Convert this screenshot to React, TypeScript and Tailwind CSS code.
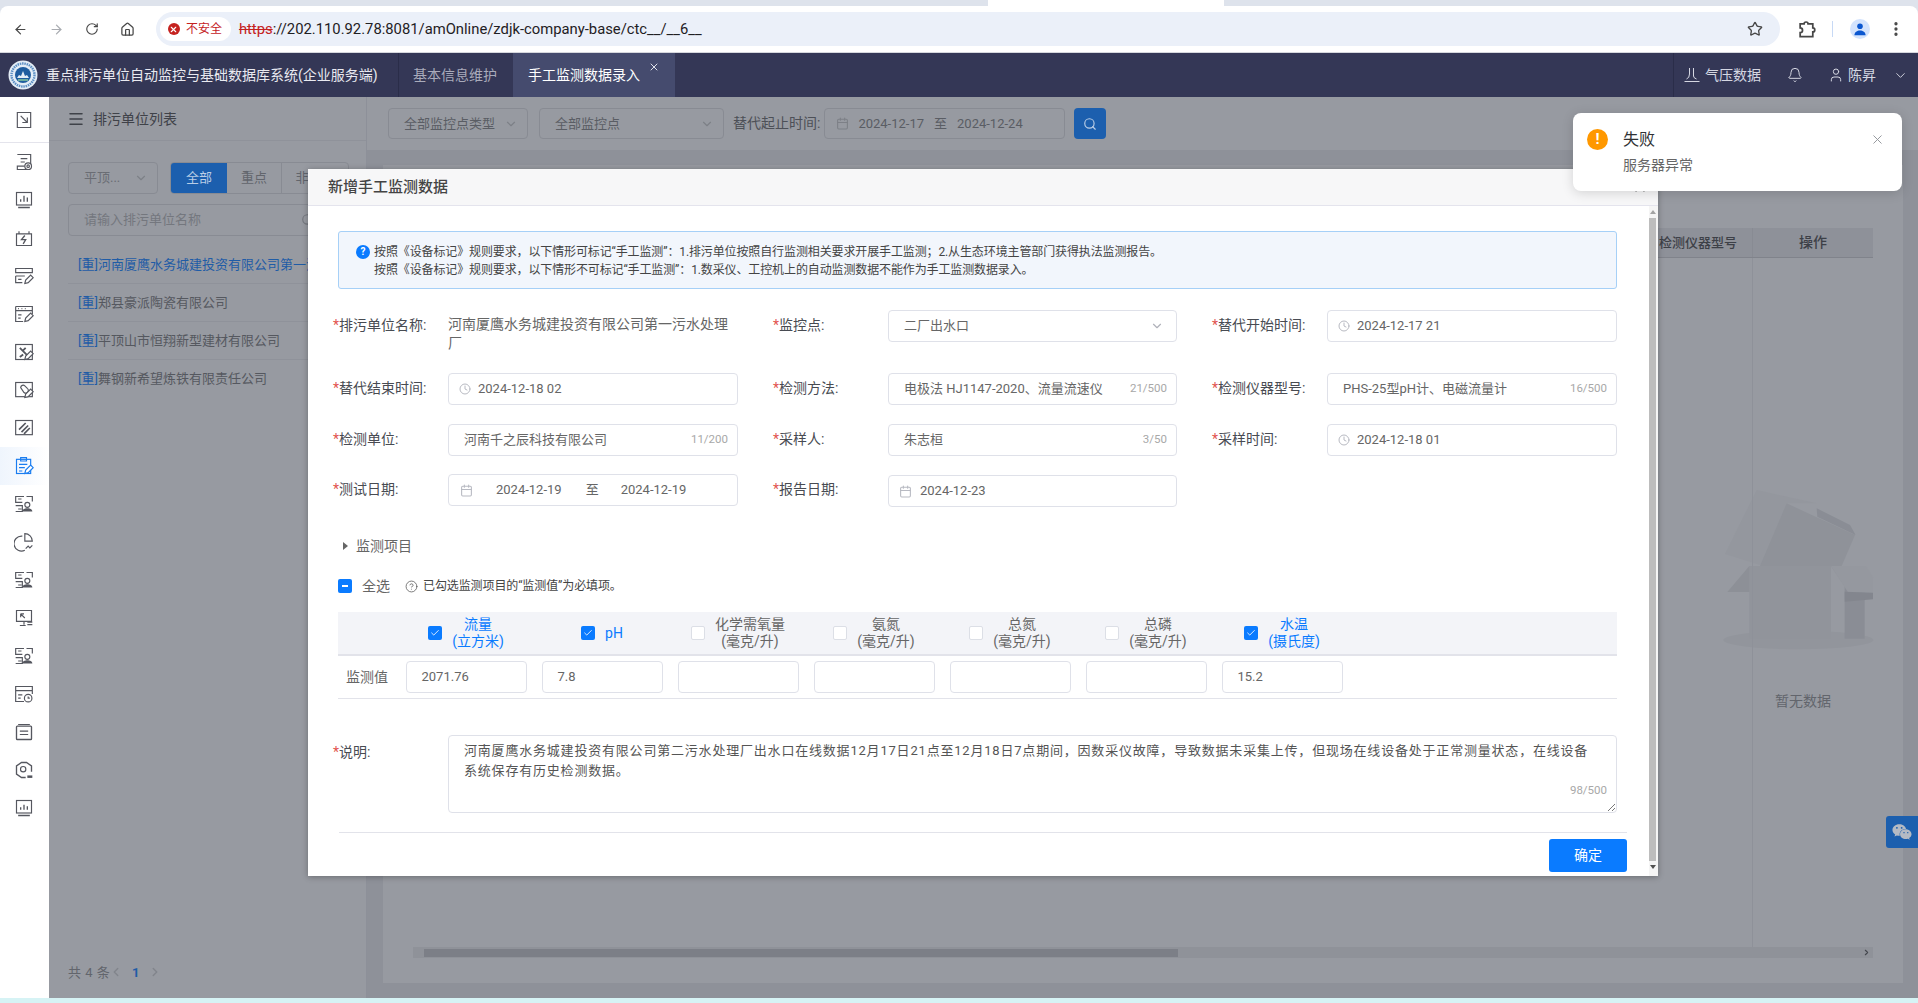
import type { ReactNode } from 'react';
import { ArrowLeft, ArrowRight, RotateCw, Home, Star, MoreVertical, ChevronDown, ChevronLeft, ChevronRight, Search, Clock, Calendar, X, Bell, User, Menu, Check, CircleHelp } from 'lucide-react';
import { FaWeixin } from 'react-icons/fa';

const Line = ({ children, className }: { children: ReactNode; className?: string }) => (
  <svg viewBox="0 0 24 24" width="20" height="20" fill="none" stroke="currentColor" strokeWidth="1.4" className={className}>
    {children}
  </svg>
);

const pen = <path d="M13 21l1-4 6-6 3 3-6 6z" fill="#fff" />;
const person = (
  <>
    <circle cx="16" cy="13" r="3" fill="#fff" />
    <path d="M10 21c0-3 3-4 6-4s6 1 6 4z" fill="currentColor" stroke="none" />
  </>
);
const formPerson = (
  <>
    <path d="M12 3H2v7h8M2 14h8v7H2M5 6h4M5 18h4M15 3h7v6" />
    {person}
  </>
);

// sidebar icons, top to bottom
const sideIcons: ReactNode[] = [
  <><path d="M4 3h16v14l-3 4H4v-4h9" /><path d="M8 8h8M8 12h5" /><circle cx="17" cy="17" r="4" fill="#fff" /><circle cx="17" cy="17" r="1.5" /></>,
  <><rect x="3" y="3" width="18" height="15" /><path d="M8 14v-3M12 14V7M16 14v-5M5 21h14" strokeWidth="1.6" /></>,
  <><path d="M3 7h18v14H3zM6 7V4M18 7V4" /><path d="M13 9l-4 5h5l-3 5" strokeWidth="1.6" /></>,
  <><path d="M2 3h20v5H2zM2 12h11M2 12v8h8M5 16h4" />{pen}</>,
  <><path d="M2 3h20v9M2 3v18h9M2 8h20M5 5.5h1M9 5.5h1M13 5.5h1M5 13h4M5 17h3" />{pen}</>,
  <><rect x="2" y="3" width="20" height="18" /><path d="M7 7l9 9M11 15l-4 3M14 7l-4 4" strokeWidth="2.2" />{pen}</>,
  <><rect x="2" y="3" width="20" height="17" /><path d="M8 9a3 3 0 0 1 5-2l3 3a3 3 0 0 1-4 5z" />{pen}</>,
  <><rect x="2" y="3" width="20" height="17" /><path d="M6 14l8-8M9 17l8-8M12 19l7-7" strokeWidth="2" /></>,
  <><rect x="3" y="4" width="17" height="17" /><path d="M8 2h7v4H8zM6 10h10M6 14h7M6 18h4" />{pen}</>,
  formPerson,
  <><path d="M10 5a9 9 0 1 0 3 17M13 2v9h9a9 9 0 0 0-9-9z" /><path d="M14 20l3-3 2 2 3-3" /></>,
  formPerson,
  <><path d="M3 3h18v13H3zM12 16v4M7 21h7M8 7l5 5M8 7v4M8 7h4M16 17h6M16 20h6" /></>,
  formPerson,
  <><path d="M12 21H2V3h20v9M2 8h20M5 13h5M5 17h3" /><circle cx="17" cy="17" r="4.5" fill="#fff" /><path d="M17 15v2h2" /></>,
  <><rect x="3" y="5" width="18" height="16" rx="1" strokeWidth="1.6" /><path d="M5 3h14M7 11h10M7 15h10" /></>,
  <><path d="M14 21H9l-6-4V7l6-4h6l6 4v7" strokeWidth="1.6" /><circle cx="11" cy="11" r="3.2" /><path d="M16 20h6" strokeWidth="3" /></>,
  <><rect x="3" y="3" width="18" height="15" /><path d="M8 14v-3M12 14V8M16 14v-4M5 21h14" strokeWidth="1.6" /></>,
];

function BrowserBar() {
  return (
    <div className="relative h-[53px] shrink-0 bg-[#dee3ec] pt-[6px]">
      <div className="absolute left-[988px] top-0 h-[6px] w-[236px] bg-white" />
      <div className="flex h-[47px] items-center rounded-t-[8px] border-b border-[#d5d7dd] bg-white pl-[13px] pr-[13px] text-[#474747]">
        <ArrowLeft size={15} strokeWidth={2} />
        <ArrowRight size={15} strokeWidth={2} className="ml-[21px] text-[#a9acb1]" />
        <RotateCw size={14} strokeWidth={2} className="ml-[21px]" />
        <Home size={15} strokeWidth={2} className="ml-[21px]" />
        <div className="ml-[21px] flex h-[34px] w-[1628px] items-center rounded-full bg-[#ebf0f9] pl-[4px] pr-[17px]">
          <div className="flex h-[24px] w-[71px] items-center rounded-full bg-white pl-[8px] text-[12px] text-[#c5221f]">
            <span className="flex h-[12px] w-[12px] items-center justify-center rounded-full bg-[#c5221f] text-white">
              <X size={9} strokeWidth={3} />
            </span>
            <span className="ml-[6px]">不安全</span>
          </div>
          <div className="ml-[8px] text-[14.8px] text-[#1f2023]">
            <span className="text-[#c5221f] line-through">https</span>://202.110.92.78:8081/amOnline/zdjk-company-base/ctc__/__6__
          </div>
          <Star size={16} strokeWidth={2} className="ml-auto" />
        </div>
        <svg viewBox="0 0 24 24" width="19" height="19" fill="none" stroke="currentColor" strokeWidth="2.2" className="ml-[17px]">
          <path d="M4 5h5a2.5 2.5 0 0 1 5 0h6v5a2.5 2.5 0 0 1 0 5v6H4v-5a2.5 2.5 0 0 0 0-6z" />
        </svg>
        <div className="ml-[16px] h-[16px] w-px bg-[#c7d9f5]" />
        <span className="ml-[17px] flex h-[20px] w-[20px] items-center justify-center overflow-hidden rounded-full bg-[#d3e3fd]">
          <svg viewBox="0 0 20 20" width="14" height="14" fill="#0b57d0">
            <circle cx="10" cy="6" r="4" />
            <path d="M2 19c0-5 4-7 8-7s8 2 8 7z" />
          </svg>
        </span>
        <MoreVertical size={18} strokeWidth={2.4} className="ml-[17px]" />
      </div>
    </div>
  );
}

function NavBar() {
  return (
    <div className="flex h-[44px] shrink-0 items-center bg-[#343756] text-[14px] text-[#e8e9f0]">
      <svg viewBox="0 0 30 30" width="30" height="30" className="ml-[8px] shrink-0">
        <circle cx="15" cy="15" r="14.5" fill="#e4edf6" />
        <circle cx="15" cy="15" r="11.5" fill="none" stroke="#5c8fc4" strokeWidth="2.4" strokeDasharray="1.5 0.8" />
        <circle cx="15" cy="15" r="8" fill="#1f5d9f" />
        <path d="M9 18h12l-2-3-2 1-2-5-2 5-2-1z" fill="#e4edf6" />
        <path d="M10 20h10" stroke="#8fd0a0" strokeWidth="1.4" />
      </svg>
      <div className="ml-[8px] w-[352px] whitespace-nowrap">重点排污单位自动监控与基础数据库系统(企业服务端)</div>
      <div className="h-full w-[115px] border-l border-[#2a2d49] pl-[14px] leading-[44px] text-[#a9abbb]">基本信息维护</div>
      <div className="relative h-full w-[162px] bg-[#454b6e] pl-[15px] leading-[44px] text-white">
        手工监测数据录入
        <X size={12} strokeWidth={2} className="absolute right-[15px] top-[8px] text-[#dfe1ea]" />
      </div>
      <div className="ml-auto flex h-full w-[245px] items-center border-l border-[#2a2d49] pl-[10px] text-[#d5d7e2]">
        <svg viewBox="0 0 16 16" width="16" height="16" fill="none" stroke="currentColor" strokeWidth="1">
          <path d="M5.5 1v6q0 4-3 5M9.5 1v8q0 2 3 3M.5 14.5h15" />
        </svg>
        <span className="ml-[5px]">气压数据</span>
        <Bell size={16} strokeWidth={1.5} className="ml-[26px]" />
        <User size={16} strokeWidth={1.5} className="ml-[25px]" />
        <span className="ml-[4px]">陈昇</span>
        <ChevronDown size={15} strokeWidth={1.5} className="ml-[17px]" />
      </div>
    </div>
  );
}

function Sidebar() {
  return (
    <div className="w-[49px] shrink-0 bg-white pr-0 text-[#55575f]">
      <div className="flex h-[46px] items-center justify-center border-b border-[#e4e4ec] pr-[2px]">
        <Line><path d="M4 3h16v18H4z" /><path d="M8 7l8 8M16 9v6H10" /></Line>
      </div>
      {sideIcons.map((icon, i) => (
        <div
          key={i}
          className={`flex h-[38px] items-center justify-center pr-[2px] ${i === 8 ? 'bg-gradient-to-r from-[#eff5fd] to-white text-[#1a7df0]' : ''}`}
        >
          <Line>{icon}</Line>
        </div>
      ))}
    </div>
  );
}

const companies = ['郑县豪派陶瓷有限公司', '平顶山市恒翔新型建材有限公司', '舞钢新希望炼铁有限责任公司'];

function ListPanel() {
  return (
    <div className="flex w-[318px] shrink-0 flex-col border-r border-[#8d9099] bg-[#979aa1] text-[13px] text-[#55585f]">
      <div className="flex h-[44px] shrink-0 items-center border-b border-[#8f929a] pl-[18px] pt-px text-[#3f4249]">
        <Menu size={18} strokeWidth={2} />
        <span className="ml-[8px] text-[14px]">排污单位列表</span>
      </div>
      <div className="mt-[21px] flex h-[32px] pl-[19px]">
        <div className="flex w-[90px] items-center justify-between rounded-[4px] border border-[#888b93] pl-[15px] pr-[9px] text-[#6a6d74]">
          平顶...
          <ChevronDown size={14} className="text-[#7d8087]" />
        </div>
        <div className="ml-[12px] flex overflow-hidden rounded-[4px] border border-[#888b93]">
          <span className="flex w-[56px] items-center justify-center bg-[#1c5fae] text-[#b9cde6]">全部</span>
          <span className="flex w-[55px] items-center justify-center border-r border-[#888b93] text-[#62656c]">重点</span>
          <span className="flex w-[66px] items-center justify-center text-[#62656c]">非重点</span>
        </div>
      </div>
      <div className="ml-[19px] mr-[20px] mt-[10px] flex h-[32px] shrink-0 items-center justify-between rounded-[4px] border border-[#888b93] pl-[15px] pr-[30px] text-[#74777e]">
        请输入排污单位名称
        <Search size={14} />
      </div>
      <div className="mx-[19px] mt-[10px]">
        <div className="flex h-[38px] items-center overflow-hidden whitespace-nowrap border-b border-[#8f929a] pl-[10px] text-[#1f5ca6]">
          [重]河南厦鹰水务城建投资有限公司第一污水处理厂
        </div>
        {companies.map((name) => (
          <div key={name} className="flex h-[38px] items-center border-b border-[#8f929a] pl-[10px] last:border-b-0">
            <span className="text-[#1f5ca6]">[重]</span>
            {name}
          </div>
        ))}
      </div>
      <div className="mt-auto flex items-center pb-[16px] pl-[19px] text-[#62656c]">
        <span className="w-[41px] whitespace-nowrap tracking-[0.5px]">共 4 条</span>
        <ChevronLeft size={14} strokeWidth={2.5} className="text-[#82858c]" />
        <span className="ml-[9px] font-bold text-[#1f5ca6]">1</span>
        <ChevronRight size={14} strokeWidth={2.5} className="ml-[9px] text-[#82858c]" />
      </div>
    </div>
  );
}

function MainArea() {
  return (
    <div className="flex min-w-0 flex-1 flex-col bg-[#8e9199]">
      <div className="flex h-[53px] shrink-0 items-center bg-[#979aa1] pl-[21px] text-[13px] text-[#5a5d64]">
        <div className="flex h-[31px] w-[140px] items-center justify-between rounded-[4px] border border-[#888b93] pl-[15px] pr-[9px]">
          全部监控点类型
          <ChevronDown size={14} className="text-[#7d8087]" />
        </div>
        <div className="ml-[11px] flex h-[31px] w-[185px] items-center justify-between rounded-[4px] border border-[#888b93] pl-[15px] pr-[9px]">
          全部监控点
          <ChevronDown size={14} className="text-[#7d8087]" />
        </div>
        <span className="ml-[9px] text-[14px] text-[#4d5057]">替代起止时间:</span>
        <div className="ml-[4px] flex h-[31px] w-[241px] items-center rounded-[4px] border border-[#888b93] pl-[11px]">
          <Calendar size={13} className="text-[#7d8087]" />
          <span className="ml-[9px]">2024-12-17</span>
          <span className="ml-[10px]">至</span>
          <span className="ml-[10px]">2024-12-24</span>
        </div>
        <div className="ml-[9px] flex h-[31px] w-[32px] items-center justify-center rounded-[4px] bg-[#1c5fae] text-[#b9cde6]">
          <Search size={14} />
        </div>
      </div>
      <div className="relative mb-[15px] ml-[16px] mr-[15px] mt-[15px] flex flex-1 flex-col bg-[#979aa1] px-[30px] pb-[25px] pt-[63px] text-[14px]">
        <svg viewBox="0 0 684 600" width="228" height="200" className="absolute left-[1307px] top-[305px]">
          <ellipse cx="325" cy="510" rx="225" ry="28" fill="#92959c" />
          <path d="M105 252L200 60l180 40-90 0-70 188z" fill="#94979e" />
          <path d="M290 100l205 95-40 93H210z" fill="#8f9299" />
          <path d="M380 115l100 50 17 30-115-55z" fill="#8a8d95" />
          <path d="M178 288h245v218H178z" fill="#91949b" />
          <path d="M423 288l41 60v158h60V288z" fill="#8a8d95" />
          <path d="M423 288h105l21 34v46H475z" fill="#95989f" />
          <path d="M464 365l85 3v20l-85 7z" fill="#83868e" />
          <path d="M178 288v78H112z" fill="#8d9097" />
        </svg>
        <div className="relative flex h-[30px] shrink-0 justify-end border-b border-[#80838b] bg-[#8e9199] text-[#3d4047]">
          <div className="flex w-[100px] items-center pl-[7px] text-[13px] font-medium">检测仪器型号</div>
          <div className="flex w-[121px] items-center justify-center border-l border-[#888b93] font-medium">操作</div>
        </div>
        <div className="relative flex min-h-0 flex-1 justify-end">
          <div className="w-[121px] border-l border-[#8e9199] pr-[20px] pt-[433px] text-center text-[#62656c]">暂无数据</div>
        </div>
        <div className="relative flex h-[11px] shrink-0 items-center justify-between bg-[#8f9299] px-[2px]">
          <div className="ml-[9px] h-[8px] w-[754px] bg-[#7c7f87]" />
          <ChevronRight size={9} strokeWidth={3} className="text-[#44474e]" />
        </div>
      </div>
    </div>
  );
}

function Field({ label, children }: { label: string; children: ReactNode }) {
  return (
    <div className="flex items-start">
      <div className="w-[115px] shrink-0 pt-[5px] text-[14px] leading-[20px] text-[#484b52]">
        <span className="text-[#e2544f]">*</span>
        {label}:
      </div>
      <div className="min-w-0 flex-1">{children}</div>
    </div>
  );
}

function Input({ icon, text, count, pad = 'pl-[15px]' }: { icon?: 'clock' | 'cal'; text?: string; count?: string; pad?: string }) {
  return (
    <div className={`flex h-[32px] items-center rounded-[4px] border border-[#dfe1e9] bg-white pr-[9px] text-[13px] text-[#666] ${icon ? 'pl-[10px]' : pad}`}>
      {icon === 'clock' && <Clock size={12} className="mr-[7px] text-[#b8bac2]" />}
      {icon === 'cal' && <Calendar size={13} className="mr-[8px] text-[#b8bac2]" />}
      <span>{text}</span>
      {count && <span className="ml-auto text-[11.5px] text-[#a8a8a8]">{count}</span>}
    </div>
  );
}

function Box({ state }: { state: 'on' | 'off' | 'some' }) {
  if (state === 'off') return <span className="h-[14px] w-[14px] shrink-0 rounded-[2px] border border-[#dcdfe6] bg-white" />;
  return (
    <span className="flex h-[14px] w-[14px] shrink-0 items-center justify-center rounded-[2px] bg-[#0a7bff] text-white">
      {state === 'on' ? <Check size={10} strokeWidth={2} /> : <span className="h-[2px] w-[6px] bg-white" />}
    </span>
  );
}

const items = [
  { name: '流量', unit: '(立方米)', on: true, value: '2071.76' },
  { name: 'pH', unit: '', on: true, value: '7.8' },
  { name: '化学需氧量', unit: '(毫克/升)', on: false, value: '' },
  { name: '氨氮', unit: '(毫克/升)', on: false, value: '' },
  { name: '总氮', unit: '(毫克/升)', on: false, value: '' },
  { name: '总磷', unit: '(毫克/升)', on: false, value: '' },
  { name: '水温', unit: '(摄氏度)', on: true, value: '15.2' },
];

function Modal() {
  return (
    <div className="absolute left-[308px] top-[169px] flex h-[707px] w-[1350px] flex-col bg-white shadow-[0_1px_6px_rgba(0,0,0,0.3)]">
      <div className="flex h-[37px] shrink-0 items-center justify-between border-b border-[#e4e4ed] bg-[#f7f7f8] pl-[20px] pr-[10px]">
        <span className="text-[15px] font-medium text-[#444]">新增手工监测数据</span>
        <X size={16} className="text-[#777]" />
      </div>
      <div className="flex min-h-0 flex-1">
        <div className="min-w-0 flex-1 pl-[25px] pr-[32px] pt-[25px]">
          <div className="ml-[5px] flex h-[58px] rounded-[3px] border border-[#a6d0f7] bg-[#f2f6fc] pl-[17px] pt-[11px] text-[12px] leading-[18px] tracking-[-0.12px] text-[#444]">
            <span className="mt-[2px] flex h-[14px] w-[14px] shrink-0 items-center justify-center rounded-full bg-[#0a7bff] text-[10px] font-bold text-white">?</span>
            <div className="ml-[4px]">
              <div>按照《设备标记》规则要求，以下情形可标记“手工监测”：1.排污单位按照自行监测相关要求开展手工监测；2.从生态环境主管部门获得执法监测报告。</div>
              <div>按照《设备标记》规则要求，以下情形不可标记“手工监测”：1.数采仪、工控机上的自动监测数据不能作为手工监测数据录入。</div>
            </div>
          </div>

          <div className="mt-[21px] grid grid-cols-[405px_404px_405px] gap-x-[35px]">
            <Field label="排污单位名称">
              <div className="pt-[5px] text-[14px] leading-[19px] text-[#666]">河南厦鹰水务城建投资有限公司第一污水处理厂</div>
            </Field>
            <Field label="监控点">
              <div className="flex h-[32px] items-center justify-between rounded-[4px] border border-[#dfe1e9] pl-[15px] pr-[12px] text-[13px] text-[#666]">
                二厂出水口
                <ChevronDown size={14} className="text-[#b0b2ba]" />
              </div>
            </Field>
            <Field label="替代开始时间">
              <Input icon="clock" text="2024-12-17 21" />
            </Field>
          </div>
          <div className="mt-[20px] grid grid-cols-[405px_404px_405px] gap-x-[35px]">
            <Field label="替代结束时间">
              <Input icon="clock" text="2024-12-18 02" />
            </Field>
            <Field label="检测方法">
              <Input text="电极法 HJ1147-2020、流量流速仪" count="21/500" />
            </Field>
            <Field label="检测仪器型号">
              <Input text="PHS-25型pH计、电磁流量计" count="16/500" />
            </Field>
          </div>
          <div className="mt-[19px] grid grid-cols-[405px_404px_405px] gap-x-[35px]">
            <Field label="检测单位">
              <Input text="河南千之辰科技有限公司" count="11/200" />
            </Field>
            <Field label="采样人">
              <Input text="朱志桓" count="3/50" />
            </Field>
            <Field label="采样时间">
              <Input icon="clock" text="2024-12-18 01" />
            </Field>
          </div>
          <div className="mt-[18px] grid grid-cols-[405px_404px_405px] gap-x-[35px]">
            <Field label="测试日期">
              <div className="flex h-[32px] items-center rounded-[4px] border border-[#dfe1e9] pl-[11px] text-[13px] text-[#666]">
                <Calendar size={13} className="text-[#b8bac2]" />
                <span className="ml-[23px]">2024-12-19</span>
                <span className="ml-[24px]">至</span>
                <span className="ml-[22px]">2024-12-19</span>
              </div>
            </Field>
            <Field label="报告日期">
              <div className="pt-px">
                <Input icon="cal" text="2024-12-23" />
              </div>
            </Field>
          </div>

          <div className="mt-[29px] flex h-[20px] items-center pl-[10px] text-[14px] text-[#666]">
            <span className="h-0 w-0 border-y-[4px] border-l-[5px] border-y-transparent border-l-[#666]" />
            <span className="ml-[8px]">监测项目</span>
          </div>

          <div className="ml-[5px] mt-[20px] flex h-[20px] items-center">
            <Box state="some" />
            <span className="ml-[10px] text-[14px] text-[#666]">全选</span>
            <CircleHelp size={13} strokeWidth={1.4} className="ml-[15px] text-[#555]" />
            <span className="ml-[5px] text-[12px] tracking-[-0.1px] text-[#444]">已勾选监测项目的“监测值”为必填项。</span>
          </div>

          <div className="ml-[5px] mt-[16px]">
            <div className="flex h-[44px] border-b-2 border-[#e2e3ea] bg-[#f3f4f8] pl-[60px] text-center text-[14px] leading-[17px]">
              {items.map((it) => (
                <div key={it.name} className="flex w-[136px] items-center justify-center gap-[10px]">
                  <Box state={it.on ? 'on' : 'off'} />
                  <div className={it.on ? 'text-[#0a7bff]' : 'text-[#666]'}>
                    <div className="whitespace-nowrap">{it.name}</div>
                    {it.unit && <div className="whitespace-nowrap">{it.unit}</div>}
                  </div>
                </div>
              ))}
            </div>
            <div className="flex h-[43px] items-center border-b border-[#e2e3ea] text-[14px] text-[#666]">
              <div className="w-[60px] shrink-0 pl-[8px]">监测值</div>
              {items.map((it) => (
                <div key={it.name} className="w-[136px] shrink-0 px-[7.5px]">
                  <Input text={it.value} />
                </div>
              ))}
            </div>
          </div>

          <div className="mt-[36px] flex">
            <div className="w-[115px] shrink-0 pt-[7px] text-[14px] leading-[20px] text-[#484b52]">
              <span className="text-[#e2544f]">*</span>说明:
            </div>
            <div className="relative h-[78px] flex-1 rounded-[4px] border border-[#dfe1e9] pl-[15px] pt-[5px] text-[13px] leading-[20px] tracking-[0.8px] text-[#555]">
              <div className="whitespace-nowrap">河南厦鹰水务城建投资有限公司第二污水处理厂出水口在线数据12月17日21点至12月18日7点期间，因数采仪故障，导致数据未采集上传，但现场在线设备处于正常测量状态，在线设备</div>
              <div className="whitespace-nowrap">系统保存有历史检测数据。</div>
              <span className="absolute bottom-[12px] right-[9px] text-[11.5px] tracking-normal text-[#a8a8a8]">98/500</span>
              <svg viewBox="0 0 10 10" width="10" height="10" stroke="#777" className="absolute bottom-0 right-0">
                <path d="M2 9l7-7M6 9l3-3" />
              </svg>
            </div>
          </div>

          <div className="-mr-[10px] ml-[6px] mt-[19px] border-t border-[#e2e3ea] pt-[6px]">
            <div className="flex justify-end">
              <div className="flex h-[33px] w-[78px] items-center justify-center rounded-[3px] bg-[#0a7bff] text-[14px] text-white">确定</div>
            </div>
          </div>
        </div>
        <div className="flex w-[9px] shrink-0 flex-col items-start bg-[#f5f5f5] pr-[2px]">
          <span className="mx-auto mt-[4px] h-0 w-0 border-x-[3px] border-b-[4px] border-x-transparent border-b-[#a3a3a3]" />
          <div className="mt-[4px] h-[643px] w-[7px] bg-[#bdbdbd]" />
          <span className="mx-auto mt-[4px] h-0 w-0 border-x-[3px] border-t-[4px] border-x-transparent border-t-[#505050]" />
        </div>
      </div>
    </div>
  );
}

function Notice() {
  return (
    <div className="absolute left-[1573px] top-[113px] flex h-[78px] w-[329px] rounded-[8px] bg-white pl-[14px] pt-[16px] shadow-[0_2px_12px_rgba(0,0,0,0.15)]">
      <span className="flex h-[21px] w-[21px] shrink-0 items-center justify-center rounded-full bg-[#ff9800] text-[15px] font-bold leading-none text-white">!</span>
      <div className="ml-[15px]">
        <div className="text-[16px] leading-[21px] text-[#303133]">失败</div>
        <div className="mt-[5px] text-[14px] leading-[20px] text-[#666]">服务器异常</div>
      </div>
      <X size={15} strokeWidth={1.5} className="ml-auto mr-[17px] mt-[3px] text-[#909399]" />
    </div>
  );
}

export default function App() {
  return (
    <div className="relative flex h-[1003px] w-[1918px] flex-col overflow-hidden bg-white font-['Roboto','Noto_Sans_CJK_SC',sans-serif]">
      <BrowserBar />
      <NavBar />
      <div className="flex min-h-0 flex-1">
        <Sidebar />
        <ListPanel />
        <MainArea />
      </div>
      <div className="h-[5px] shrink-0 bg-[#d6f3f5]" />
      <Modal />
      <Notice />
      <div className="absolute left-[1886px] top-[816px] flex h-[32px] w-[32px] items-center justify-center rounded-l-[3px] bg-[#1c5fae] text-[#b4bac4]">
        <FaWeixin size={20} />
      </div>
    </div>
  );
}
